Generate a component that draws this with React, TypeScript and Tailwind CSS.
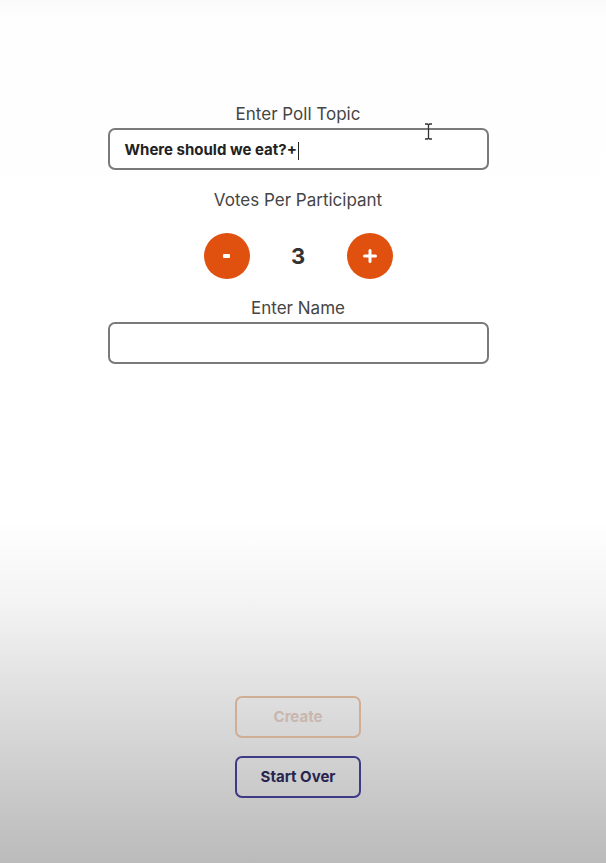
import React from "react";

export default function App() {
  return (
    <div
      className="relative flex h-screen w-full flex-col items-center pr-[10px] bg-[linear-gradient(to_bottom,#fafafa_0px,#fefefe_18px,#ffffff_520px,#f4f4f4_600px,#dedede_700px,#c8c8c8_800px,#bbbbbb_863px)]"
      style={{ fontFamily: "Inter, 'Noto Sans', sans-serif" }}
    >
      <div className="flex w-[381px] flex-col items-center pt-[103px]">
        <div className="h-[22px] text-[17px] leading-[22px] text-[#454545]">Enter Poll Topic</div>
        <div className="mt-[3px] flex h-[42px] w-full items-center rounded-[7px] border-2 border-[#7a7a7a] bg-white px-[15px] pt-[3px]">
          <span className="text-[15px] font-bold text-[#222]">Where should we eat?+</span>
          <span className="ml-[1px] h-[18px] w-[1px] bg-[#222]" />
        </div>
        <div className="mt-[19px] h-[22px] text-[17px] leading-[22px] text-[#454545]">Votes Per Participant</div>
        <div className="mt-[22px] flex items-center">
          <button className="flex h-[46px] w-[46px] items-center justify-center rounded-full bg-[#e0500f] text-white">
            <span className="block h-[4px] w-[7px] rounded-[1px] bg-white" />
          </button>
          <div className="w-[97px] text-center text-[22px] font-bold text-[#333]">3</div>
          <button className="flex h-[46px] w-[46px] items-center justify-center rounded-full bg-[#e0500f] text-white">
            <svg width="14" height="14" viewBox="0 0 14 14">
              <path d="M7 1.5v11M1.5 7h11" stroke="white" strokeWidth="3" strokeLinecap="round" />
            </svg>
          </button>
        </div>
        <div className="mt-[18px] h-[22px] text-[17px] leading-[22px] text-[#454545]">Enter Name</div>
        <div className="mt-[3px] h-[42px] w-full rounded-[7px] border-2 border-[#7a7a7a] bg-white" />
      </div>

      <div className="mt-auto flex flex-col items-center gap-[18px] pb-[65px]">
        <button className="h-[42px] w-[126px] rounded-[7px] border-2 border-[#cfae96] text-[15px] font-bold text-[#c9b6ae]">
          Create
        </button>
        <button className="h-[42px] w-[126px] rounded-[7px] border-2 border-[#3f3a86] text-[15px] font-bold text-[#28244f]">
          Start Over
        </button>
      </div>

      <svg className="absolute left-[424px] top-[123px]" width="9" height="17" viewBox="0 0 9 17">
        <path d="M1 1h2.5l1 1 1-1H8M4.5 2v13M1 16h2.5l1-1 1 1H8" stroke="#333" strokeWidth="1.3" fill="none" />
      </svg>
    </div>
  );
}
